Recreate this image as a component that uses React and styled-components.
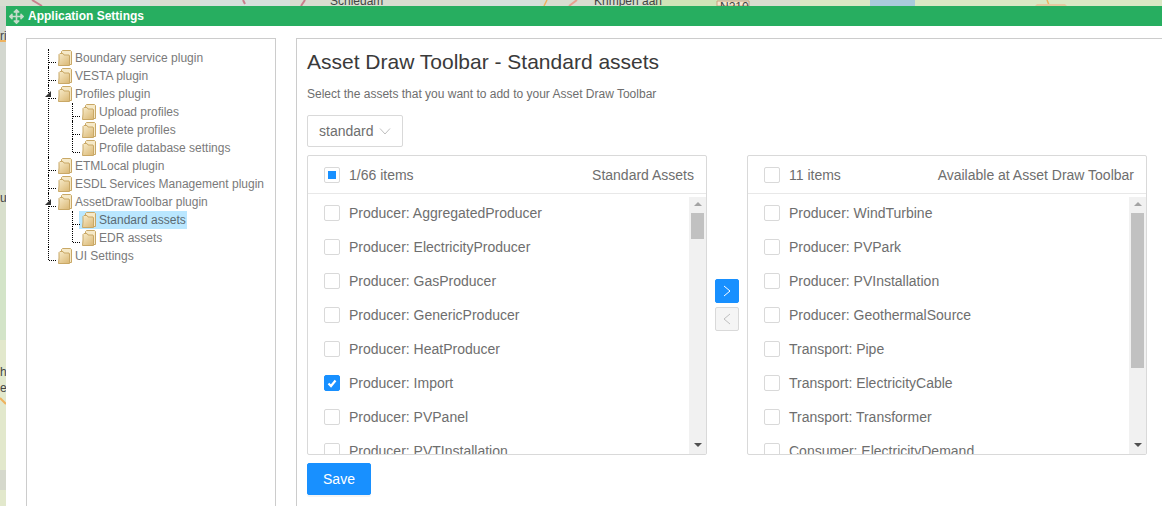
import React from "react";
import styled, { createGlobalStyle } from "styled-components";
import { FaArrowsAlt } from "react-icons/fa";

const GlobalStyle = createGlobalStyle`
  html, body {
    margin: 0;
    height: 100%;
    overflow: hidden;
    background: #e4e8d4;
    font-family: "Liberation Sans", Arial, sans-serif;
  }
`;

const MapBackdrop = styled.svg`
  position: absolute;
  top: 0;
  left: 0;
  width: 1162px;
  height: 506px;
`;

const MapLabel = styled.text`
  font-family: "Liberation Sans", Arial, sans-serif;
  font-size: 12px;
  fill: #444;
`;

const Window = styled.div`
  position: absolute;
  top: 6px;
  left: 6px;
  right: 0;
  bottom: 0;
  background: #fff;
  overflow: hidden;
`;

const Header = styled.div`
  height: 20px;
  background: #27ae60;
  display: flex;
  align-items: center;
  gap: 4px;
  padding-left: 3px;
  color: #fff;
  font-size: 12px;
  font-weight: bold;
`;

const MoveIcon = styled(FaArrowsAlt)`
  width: 15px;
  height: 15px;
  color: #c5dccb;
`;

const Body = styled.div`
  display: flex;
  gap: 20px;
  padding: 12px 0 0 20px;
`;

const TreePanel = styled.div`
  width: 250px;
  height: 480px;
  flex: none;
  border: 1px solid #ccc;
  padding-top: 10px;
  box-sizing: border-box;
`;

const TreeList = styled.ul`
  list-style: none;
  margin: 0;
  padding: 0 0 0 ${(p) => p.$indent}px;
`;

const TreeItem = styled.li`
  position: relative;
  padding-left: 10px;

  &::before {
    content: "";
    position: absolute;
    left: 0;
    top: 0;
    bottom: 0;
    border-left: 1px dotted #000;
  }
  &:last-child::before {
    bottom: auto;
    height: 13px;
  }
  &::after {
    content: "";
    position: absolute;
    left: 1px;
    top: 13px;
    width: 7px;
    border-top: 1px dotted #000;
  }
`;

const Expander = styled.span`
  position: absolute;
  z-index: 1;
  left: -3px;
  top: 6px;
  width: 0;
  height: 0;
  border-style: solid;
  border-width: 0 0 6px 6px;
  border-color: transparent transparent #333 transparent;
`;

const NodeRow = styled.div`
  display: flex;
  align-items: center;
  gap: 2px;
  height: 18px;
  width: fit-content;
  margin-left: ${(p) => (p.$selected ? "-3px" : "0")};
  padding: 0 ${(p) => (p.$selected ? "1px" : "0")} 0 ${(p) => (p.$selected ? "3px" : "0")};
  font-size: 12px;
  line-height: 18px;
  color: ${(p) => (p.$selected ? "#5c6b73" : "#7a7a7a")};
  background: ${(p) => (p.$selected ? "#bae7ff" : "transparent")};
  white-space: nowrap;
`;

const MainPanel = styled.div`
  width: 900px;
  height: 480px;
  flex: none;
  border: 1px solid #ccc;
  padding: 10px;
  box-sizing: border-box;
`;

const Title = styled.h2`
  margin: 0;
  font-size: 21px;
  font-weight: normal;
  line-height: 26px;
  color: #3a3a3a;
`;

const Subtitle = styled.p`
  margin: 11px 0 0;
  font-size: 12px;
  line-height: 16px;
  color: #6e6e6e;
`;

const SelectBox = styled.div`
  margin-top: 13px;
  width: 96px;
  height: 32px;
  box-sizing: border-box;
  display: flex;
  align-items: center;
  gap: 6px;
  padding-left: 11px;
  border: 1px solid #d9d9d9;
  border-radius: 2px;
  font-size: 14px;
  color: #6e6e6e;
`;

const Chevron = styled.svg`
  width: 12px;
  height: 12px;
  fill: none;
  stroke: #bfbfbf;
  stroke-width: 1;
`;

const Transfer = styled.div`
  margin-top: 8px;
  display: flex;
  align-items: center;
`;

const ListBox = styled.div`
  width: 400px;
  height: 300px;
  box-sizing: border-box;
  border: 1px solid #d9d9d9;
  border-radius: 2px;
  display: flex;
  flex-direction: column;
  overflow: hidden;
`;

const ListHeader = styled.div`
  height: 38px;
  flex: none;
  box-sizing: border-box;
  border-bottom: 1px solid #e8e8e8;
  display: flex;
  align-items: center;
  padding: 0 12px 0 16px;
  font-size: 14px;
  color: #6e6e6e;
`;

const HeaderCount = styled.span`
  margin-left: 9px;
  flex: 1;
`;

const ListBody = styled.div`
  flex: 1;
  min-height: 0;
  display: flex;
`;

const Rows = styled.div`
  flex: 1;
  overflow: hidden;
  padding-top: 2px;
`;

const Row = styled.div`
  height: 34px;
  display: flex;
  align-items: center;
  gap: 9px;
  padding-left: 16px;
  font-size: 14px;
  color: #6e6e6e;
  white-space: nowrap;
`;

const Box = styled.span`
  width: 16px;
  height: 16px;
  flex: none;
  box-sizing: border-box;
  border: 1px solid ${(p) => (p.$state === "checked" ? "#1890ff" : "#d9d9d9")};
  border-radius: 2px;
  background: ${(p) => (p.$state === "checked" ? "#1890ff" : "#fff")};
  display: flex;
  align-items: center;
  justify-content: center;
`;

const BoxFill = styled.span`
  width: 8px;
  height: 8px;
  background: #1890ff;
`;

const CheckMark = styled.svg`
  width: 12px;
  height: 12px;
  fill: none;
  stroke: #fff;
  stroke-width: 2.2;
`;

const Scrollbar = styled.div`
  width: 17px;
  margin-top: 3px;
  flex: none;
  background: #f1f1f1;
  display: flex;
  flex-direction: column;
  align-items: center;
`;

const ScrollArrow = styled.span`
  width: 0;
  height: 0;
  flex: none;
  margin: ${(p) => (p.$down ? "auto 0 7px" : "5px 0 0")};
  border-left: 4px solid transparent;
  border-right: 4px solid transparent;
  border-bottom: ${(p) => (p.$down ? "0" : "4px solid #a3a3a3")};
  border-top: ${(p) => (p.$down ? "4px solid #505050" : "0")};
`;

const ScrollThumb = styled.span`
  width: 13px;
  flex: none;
  margin-top: 7px;
  height: ${(p) => p.$size}px;
  background: #c1c1c1;
`;

const MoveButtons = styled.div`
  width: 40px;
  flex: none;
  display: flex;
  flex-direction: column;
  align-items: center;
  gap: 4px;
`;

const MoveButton = styled.button`
  width: 24px;
  height: 24px;
  padding: 0;
  box-sizing: border-box;
  border: 1px solid ${(p) => (p.disabled ? "#d9d9d9" : "#1890ff")};
  border-radius: 2px;
  background: ${(p) => (p.disabled ? "#f5f5f5" : "#1890ff")};
  display: flex;
  align-items: center;
  justify-content: center;
`;

const MoveGlyph = styled.svg`
  width: 12px;
  height: 12px;
  fill: none;
  stroke: ${(p) => (p.$muted ? "#bfbfbf" : "#fff")};
  stroke-width: 1;
`;

const SaveButton = styled.button`
  display: block;
  margin-top: 8px;
  width: 64px;
  height: 32px;
  padding: 0;
  border: 1px solid #1890ff;
  border-radius: 2px;
  background: #1890ff;
  color: #fff;
  font-family: inherit;
  font-size: 14px;
  box-shadow: 0 2px 0 rgba(0, 0, 0, 0.045);
`;

const FolderIcon = () => (
  <svg width="15" height="16" viewBox="0 0 15 16">
    <defs>
      <linearGradient id="folderFill" x1="0" y1="0" x2="0.8" y2="1">
        <stop offset="0" stopColor="#f8eccb" />
        <stop offset="1" stopColor="#dcbb7a" />
      </linearGradient>
    </defs>
    <path d="M3.500 4V1.500L4.500.5h8l1 1v13h-3z" fill="#f6e9c8" stroke="#c9a866" strokeWidth="1" />
    <path d="M.5 15.500 1 10V4.500l1-1h3l1 1.500h5l.5 1v9.500z" fill="url(#folderFill)" stroke="#c9a866" strokeWidth="1" />
  </svg>
);

const treeData = [
  { label: "Boundary service plugin" },
  { label: "VESTA plugin" },
  {
    label: "Profiles plugin",
    children: [{ label: "Upload profiles" }, { label: "Delete profiles" }, { label: "Profile database settings" }],
  },
  { label: "ETMLocal plugin" },
  { label: "ESDL Services Management plugin" },
  {
    label: "AssetDrawToolbar plugin",
    children: [{ label: "Standard assets", selected: true }, { label: "EDR assets" }],
  },
  { label: "UI Settings" },
];

const leftItems = [
  "Producer: AggregatedProducer",
  "Producer: ElectricityProducer",
  "Producer: GasProducer",
  "Producer: GenericProducer",
  "Producer: HeatProducer",
  "Producer: Import",
  "Producer: PVPanel",
  "Producer: PVTInstallation",
];

const rightItems = [
  "Producer: WindTurbine",
  "Producer: PVPark",
  "Producer: PVInstallation",
  "Producer: GeothermalSource",
  "Transport: Pipe",
  "Transport: ElectricityCable",
  "Transport: Transformer",
  "Consumer: ElectricityDemand",
];

const Tree = ({ items, indent }) => (
  <TreeList $indent={indent}>
    {items.map((item) => (
      <TreeItem key={item.label}>
        {item.children && <Expander />}
        <NodeRow $selected={item.selected}>
          <FolderIcon />
          {item.label}
        </NodeRow>
        {item.children && <Tree items={item.children} indent={14} />}
      </TreeItem>
    ))}
  </TreeList>
);

const Scroll = ({ size }) => (
  <Scrollbar>
    <ScrollArrow />
    <ScrollThumb $size={size} />
    <ScrollArrow $down />
  </Scrollbar>
);

const AssetList = ({ items, count, title, thumb, headState, checked }) => (
  <ListBox>
    <ListHeader>
      <Box>{headState === "partial" && <BoxFill />}</Box>
      <HeaderCount>{count}</HeaderCount>
      {title}
    </ListHeader>
    <ListBody>
      <Rows>
        {items.map((item) => (
          <Row key={item}>
            <Box $state={item === checked ? "checked" : "empty"}>
              {item === checked && (
                <CheckMark viewBox="0 0 12 12">
                  <path d="M2.500 6.500 5 9l4.500-5.500" />
                </CheckMark>
              )}
            </Box>
            {item}
          </Row>
        ))}
      </Rows>
      <Scroll size={thumb} />
    </ListBody>
  </ListBox>
);

export default function App() {
  return (
    <>
      <GlobalStyle />
      <MapBackdrop viewBox="0 0 1162 506">
        <rect width="1162" height="506" fill="#e2e8cc" />
        {/* left strip */}
        <path d="M0 0h6v190H0z" fill="#d3d7cf" />
        <path d="M0 190h6v60H0z" fill="#d8dfcc" />
        <path d="M0 250h6v90H0z" fill="#d3e4c8" />
        <path d="M0 470h6v20H0z" fill="#d5d8cc" />
        <path d="M0 41h6M0 398l6 6" stroke="#eeb25e" strokeWidth="2" fill="none" />
        {/* top strip */}
        <path d="M0 0h800v6H0z" fill="#d8ddd0" />
        <path d="M90 0h60v6H90zM200 0h90v6h-90zM480 0h60v6h-60z" fill="#d5e0dc" />
        <path d="M800 0h362v6H800z" fill="#d9e8c4" />
        <path d="M870 0h45v6h-45z" fill="#a9cbdc" />
        <path d="M650 0h70v6h-70z" fill="#cfe4b8" />
        <path d="M32 0l10 6M243 0l2 4M305 0l-4 6" stroke="#c97f8c" strokeWidth="2" fill="none" />
        <path d="M547 0l-3 6M1047 0l2 5" stroke="#eeb25e" strokeWidth="1.500" fill="none" />
        <path d="M577 0l-8 6" stroke="#e8a090" strokeWidth="2" fill="none" />
        <path d="M1035 6l2-2h28l2 2z" fill="#e6c9a0" />
        <path d="M717 6V1h32v5z" fill="#f3e6d0" stroke="#c9a27e" />
        <MapLabel x="330" y="5">Schiedam</MapLabel>
        <MapLabel x="594" y="5">Krimpen aan</MapLabel>
        <MapLabel x="720" y="11">N210</MapLabel>
        <MapLabel x="0" y="40">ri</MapLabel>
        <MapLabel x="0" y="202">u</MapLabel>
        <MapLabel x="0" y="376">h</MapLabel>
        <MapLabel x="0" y="392">e</MapLabel>
      </MapBackdrop>
      <Window>
        <Header>
          <MoveIcon />
          <span>Application Settings</span>
        </Header>
        <Body>
          <TreePanel>
            <Tree items={treeData} indent={21} />
          </TreePanel>
          <MainPanel>
            <Title>Asset Draw Toolbar - Standard assets</Title>
            <Subtitle>Select the assets that you want to add to your Asset Draw Toolbar</Subtitle>
            <SelectBox>
              standard
              <Chevron viewBox="0 0 12 12">
                <path d="M1 3.500 6 9l5-5.500" />
              </Chevron>
            </SelectBox>
            <Transfer>
              <AssetList
                items={leftItems}
                count="1/66 items"
                title="Standard Assets"
                thumb={26}
                headState="partial"
                checked="Producer: Import"
              />
              <MoveButtons>
                <MoveButton type="button">
                  <MoveGlyph viewBox="0 0 12 12">
                    <path d="M3 1l6 5-6 5" />
                  </MoveGlyph>
                </MoveButton>
                <MoveButton type="button" disabled>
                  <MoveGlyph $muted viewBox="0 0 12 12">
                    <path d="M9 1 3 6l6 5" />
                  </MoveGlyph>
                </MoveButton>
              </MoveButtons>
              <AssetList items={rightItems} count="11 items" title="Available at Asset Draw Toolbar" thumb={155} />
            </Transfer>
            <SaveButton type="button">Save</SaveButton>
          </MainPanel>
        </Body>
      </Window>
    </>
  );
}
